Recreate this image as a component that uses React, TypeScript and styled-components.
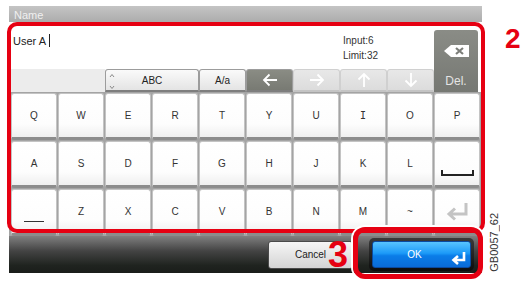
import React from 'react';
import styled, { createGlobalStyle } from 'styled-components';

const GlobalStyle = createGlobalStyle`
  html, body {
    margin: 0;
    padding: 0;
    background: #ffffff;
  }
  body {
    font-family: "Liberation Sans", Arial, sans-serif;
  }
`;

const Page = styled.div`
  position: relative;
  width: 529px;
  height: 284px;
  box-sizing: border-box;
  padding: 6px 0 0 9px;
  overflow: hidden;
`;

const Screen = styled.div`
  width: 473px;
  height: 267px;
  display: flex;
  flex-direction: column;
  background: #ffffff;
`;

const Header = styled.div`
  height: 16px;
  box-sizing: border-box;
  padding: 3px 0 0 5px;
  font-size: 11px;
  line-height: 13px;
  color: #f0f0f0;
  background: linear-gradient(#c4c4c4, #acacac);
`;

const TopGrid = styled.div`
  display: grid;
  grid-template-columns: repeat(10, 47px);
  grid-template-rows: 47px 23px;
  padding-left: 2px;
`;

const InputText = styled.div`
  grid-column: 1 / 8;
  grid-row: 1;
  padding: 12px 0 0 2px;
  font-size: 11px;
  line-height: 14px;
  color: #222;
  display: flex;
  align-items: flex-start;
`;

const Cursor = styled.span`
  display: inline-block;
  width: 1px;
  height: 13px;
  margin: 0 0 0 3px;
  background: #222;
`;

const Counter = styled.div`
  grid-column: 8 / 10;
  grid-row: 1;
  padding: 11px 0 0 3px;
  font-size: 10px;
  line-height: 15px;
  color: #333;
`;

const DelKey = styled.div`
  grid-column: 10;
  grid-row: 1 / 3;
  margin: 8px 3px 0 0;
  border-radius: 3px 3px 0 0;
  background: linear-gradient(#8a8c86, #767873);
  display: flex;
  flex-direction: column;
  align-items: center;
  justify-content: space-between;
  padding: 15px 0 4px;
  box-sizing: border-box;
  font-size: 12px;
  color: #e4e4e4;
`;

const ToolFill = styled.div`
  grid-column: 1 / 3;
  grid-row: 2;
  background: #ececec;
`;

const ToolButton = styled.div<{ $tone: 'light' | 'dark' | 'off'; $span?: number }>`
  grid-row: 2;
  grid-column: span ${p => p.$span || 1};
  position: relative;
  display: flex;
  align-items: center;
  justify-content: center;
  box-sizing: border-box;
  border-radius: 3px 3px 0 0;
  font-size: 10px;
  color: #222;
  background: ${p =>
    p.$tone === 'dark'
      ? 'linear-gradient(#8a8c84, #787a73)'
      : p.$tone === 'off'
      ? 'linear-gradient(#e8e8e8, #dcdcdc)'
      : 'linear-gradient(#fafafa, #e4e4e4)'};
  border: 1px solid ${p => (p.$tone === 'off' ? '#d0d0d0' : '#9c9c9c')};
  border-bottom: 2px solid ${p => (p.$tone === 'off' ? '#c4c4c4' : '#7e7e7e')};
`;

const Chevrons = styled.svg`
  position: absolute;
  left: 3px;
  top: 3px;
`;

const KeyGrid = styled.div`
  display: grid;
  grid-template-columns: repeat(10, 47px);
  grid-auto-rows: 48px;
  padding-left: 2px;
  background: #a4a4a4;
`;

const Key = styled.div<{ $bottom?: boolean }>`
  display: flex;
  align-items: ${p => (p.$bottom ? 'flex-end' : 'center')};
  justify-content: center;
  box-sizing: border-box;
  padding-bottom: ${p => (p.$bottom ? '9px' : '0')};
  margin: 1px 1px 0 0;
  border-radius: 3px;
  background: linear-gradient(#ffffff 0%, #fdfdfd 70%, #efefef 100%);
  border: 1px solid #c4c4c4;
  border-bottom: 3px solid #8c8c8c;
  font-size: 10px;
  color: #333;
`;

const SerifLetter = styled.span`
  font-family: "DejaVu Sans Mono", monospace;
  font-size: 10px;
`;

const Underscore = styled.span`
  display: block;
  width: 20px;
  height: 1px;
  margin-top: 20px;
  background: #333;
`;

const BottomBar = styled.div`
  height: 37px;
  display: flex;
  align-items: center;
  justify-content: flex-end;
  gap: 16px;
  padding-right: 8px;
  background: linear-gradient(#808080 0%, #444 40%, #1f231f 80%, #1a1d1a 100%);
`;

const CancelButton = styled.div`
  width: 85px;
  height: 28px;
  box-sizing: border-box;
  border: 1px solid #4a4a4a;
  border-radius: 3px;
  background: linear-gradient(#f6f6f6, #d4d4d4);
  display: flex;
  align-items: center;
  justify-content: center;
  font-size: 10px;
  color: #222;
`;

const OkFrame = styled.div`
  width: 105px;
  height: 33px;
  box-sizing: border-box;
  padding: 3px;
  border-radius: 5px;
  background: linear-gradient(#3a3a3a, #0c0c0c);
`;

const OkButton = styled.div`
  position: relative;
  height: 100%;
  border-radius: 3px;
  border: 1px solid #0a4aa0;
  box-sizing: border-box;
  background: linear-gradient(#58c4ff 0%, #1c9af8 45%, #0a7de8 55%, #0a6bd8 100%);
  display: flex;
  align-items: center;
  justify-content: center;
  padding-right: 14px;
  font-size: 10px;
  color: #ffffff;
`;

const OkArrow = styled.svg`
  position: absolute;
  right: 4px;
  bottom: 2px;
`;

const RedBox = styled.div`
  position: absolute;
  left: 7px;
  top: 22px;
  width: 478px;
  height: 211px;
  box-sizing: border-box;
  border: 4px solid #e60012;
  border-radius: 10px;
  pointer-events: none;
`;

const OkRedBox = styled.div`
  position: absolute;
  left: 353px;
  top: 227px;
  width: 130px;
  height: 52px;
  box-sizing: border-box;
  border: 5px solid #e60012;
  border-radius: 12px;
  box-shadow: 0 0 0 2px #ffffff;
  pointer-events: none;
`;

const StepNumber = styled.div<{ $size: number }>`
  position: absolute;
  font-size: ${p => p.$size}px;
  line-height: 1;
  font-weight: bold;
  color: #e60012;
`;

const Code = styled.div`
  position: absolute;
  left: 489px;
  top: 213px;
  writing-mode: vertical-rl;
  transform: rotate(180deg);
  font-size: 11px;
  line-height: 11px;
  color: #333;
`;

const Arrow = ({ dir, color }: { dir: 'left' | 'right' | 'up' | 'down'; color: string }) => {
  const rot = { left: 0, right: 180, up: 90, down: 270 }[dir];
  return (
    <svg width="16" height="14" viewBox="0 0 16 14" style={{ transform: `rotate(${rot}deg)` }}>
      <path d="M15 7H2M7.5 1.5L2 7l5.5 5.5" fill="none" stroke={color} strokeWidth="1.8" />
    </svg>
  );
};

const row1 = ['Q', 'W', 'E', 'R', 'T', 'Y', 'U', 'I', 'O', 'P'];
const row2 = ['A', 'S', 'D', 'F', 'G', 'H', 'J', 'K', 'L'];
const row3 = ['Z', 'X', 'C', 'V', 'B', 'N', 'M', '~'];

export default function App() {
  return (
    <>
      <GlobalStyle />
      <Page>
        <Screen>
          <Header>Name</Header>
          <TopGrid>
            <InputText>
              User A<Cursor />
            </InputText>
            <Counter>
              Input:6
              <br />
              Limit:32
            </Counter>
            <DelKey>
              <svg width="25" height="12" viewBox="0 0 25 12">
                <path d="M7 0H25V12H7L0 6Z" fill="#ffffff" />
                <path d="M12 3l7 6M19 3l-7 6" stroke="#7c7e79" strokeWidth="2.2" />
              </svg>
              <span>Del.</span>
            </DelKey>
            <ToolFill />
            <ToolButton $tone="light" $span={2}>
              <Chevrons width="6" height="17" viewBox="0 0 6 17">
                <path d="M1 4L3 1.5 5 4M1 13l2 2.5 2-2.5" fill="none" stroke="#8a8a8a" strokeWidth="1" />
              </Chevrons>
              ABC
            </ToolButton>
            <ToolButton $tone="light">A/a</ToolButton>
            <ToolButton $tone="dark">
              <Arrow dir="left" color="#ffffff" />
            </ToolButton>
            <ToolButton $tone="off">
              <Arrow dir="right" color="#ffffff" />
            </ToolButton>
            <ToolButton $tone="off">
              <Arrow dir="up" color="#ffffff" />
            </ToolButton>
            <ToolButton $tone="off">
              <Arrow dir="down" color="#ffffff" />
            </ToolButton>
          </TopGrid>
          <KeyGrid>
            {row1.map(k => (
              <Key key={k}>{k === 'I' ? <SerifLetter>I</SerifLetter> : k}</Key>
            ))}
            {row2.map(k => (
              <Key key={k}>{k}</Key>
            ))}
            <Key $bottom>
              <svg width="33" height="6" viewBox="0 0 33 6">
                <path d="M1 0V5H32V0" fill="none" stroke="#222" strokeWidth="2" />
              </svg>
            </Key>
            <Key>
              <Underscore />
            </Key>
            {row3.map(k => (
              <Key key={k}>{k}</Key>
            ))}
            <Key>
              <svg width="24" height="20" viewBox="0 0 24 20">
                <path d="M21 1V12H5M10 6.5L4 12l6 5.5" fill="none" stroke="#c4c4c4" strokeWidth="3" />
              </svg>
            </Key>
          </KeyGrid>
          <BottomBar>
            <CancelButton>Cancel</CancelButton>
            <OkFrame>
              <OkButton>
                OK
                <OkArrow width="16" height="13" viewBox="0 0 16 13">
                  <path d="M14 0V8H4M8 4L3.5 8 8 12" fill="none" stroke="#ffffff" strokeWidth="2.6" />
                </OkArrow>
              </OkButton>
            </OkFrame>
          </BottomBar>
        </Screen>
        <RedBox />
        <OkRedBox />
        <StepNumber $size={28} style={{ left: 505, top: 25 }}>2</StepNumber>
        <StepNumber $size={36} style={{ left: 328, top: 237 }}>3</StepNumber>
        <Code>GB0057_62</Code>
      </Page>
    </>
  );
}
